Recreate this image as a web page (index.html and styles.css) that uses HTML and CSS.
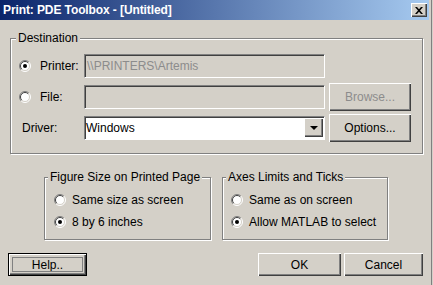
FILE: index.html
```html
<!DOCTYPE html>
<html lang="en">
<head>
    <meta charset="UTF-8">
    <title>Print: PDE Toolbox - [Untitled]</title>
    <link rel="stylesheet" href="styles.css">
</head>
<body>
    <svg class="defs" width="0" height="0">
        <symbol id="radio-off" viewBox="0 0 12 12">
            <circle cx="6" cy="6" r="5" fill="#fff"/>
            <path d="M2.1 9.9 A5.5 5.5 0 0 1 9.9 2.1" fill="none" stroke="#808080"/>
            <path d="M9.9 2.1 A5.5 5.5 0 0 1 2.1 9.9" fill="none" stroke="#fff"/>
            <path d="M2.8 9.2 A4.5 4.5 0 0 1 9.2 2.8" fill="none" stroke="#404040"/>
            <path d="M9.2 2.8 A4.5 4.5 0 0 1 2.8 9.2" fill="none" stroke="#d4d0c8"/>
        </symbol>
        <symbol id="radio-on" viewBox="0 0 12 12">
            <use href="#radio-off"/>
            <circle cx="6" cy="6" r="2" fill="#000"/>
        </symbol>
    </svg>

    <div class="frame">
        <div class="titlebar">
            <span class="title">Print: PDE Toolbox - [Untitled]</span>
            <span class="close">
                <svg width="8" height="7" viewBox="0 0 8 7">
                    <path d="M0 0h2l2 2.2L6 0h2L5 3.5 8 7H6L4 4.8 2 7H0l3-3.5z" fill="#000"/>
                </svg>
            </span>
        </div>

        <div class="content">
            <fieldset class="group dest">
                <legend>Destination</legend>
                <div class="row">
                    <label class="choice"><svg class="radio"><use href="#radio-on"/></svg>Printer:</label>
                    <div class="field disabled">\\PRINTERS\Artemis</div>
                </div>
                <div class="row">
                    <label class="choice"><svg class="radio"><use href="#radio-off"/></svg>File:</label>
                    <div class="field disabled"></div>
                    <button class="btn side" disabled>Browse...</button>
                </div>
                <div class="row">
                    <span class="label">Driver:</span>
                    <div class="field combo">
                        <span class="value">Windows</span>
                        <span class="arrow"></span>
                    </div>
                    <button class="btn side">Options...</button>
                </div>
            </fieldset>

            <div class="options">
                <fieldset class="group small figure">
                    <legend>Figure Size on Printed Page</legend>
                    <label class="opt"><svg class="radio"><use href="#radio-off"/></svg>Same size as screen</label>
                    <label class="opt"><svg class="radio"><use href="#radio-on"/></svg>8 by 6 inches</label>
                </fieldset>
                <fieldset class="group small axes">
                    <legend>Axes Limits and Ticks</legend>
                    <label class="opt"><svg class="radio"><use href="#radio-off"/></svg>Same as on screen</label>
                    <label class="opt"><svg class="radio"><use href="#radio-on"/></svg>Allow MATLAB to select</label>
                </fieldset>
            </div>

            <div class="actions">
                <button class="btn default help">Help..</button>
                <button class="btn ok">OK</button>
                <button class="btn cancel">Cancel</button>
            </div>
        </div>
    </div>
</body>
</html>
```

FILE: styles.css
```css
body {
    margin: 0;
    background-color: #d4d0c8;
    font-family: "Liberation Sans", Arial, sans-serif;
    font-size: 12px;
    color: #000;
    overflow: hidden;
}
.defs {
    position: absolute;
}
.frame {
    width: 431px;
    height: 285px;
    border-right: 1px solid #808080;
}
.titlebar {
    width: 429px;
    height: 20px;
    display: flex;
    align-items: center;
    justify-content: space-between;
    background: linear-gradient(to right, #0a246a, #a6caf0);
    box-sizing: border-box;
    padding: 0 2px 0 3px;
}
.title {
    color: #fff;
    font-weight: bold;
    font-size: 12px;
    letter-spacing: -0.1px;
}
.close {
    width: 16px;
    height: 14px;
    display: flex;
    align-items: center;
    justify-content: center;
    background-color: #d4d0c8;
    box-sizing: border-box;
    box-shadow: inset 1px 1px #fff, inset -1px -1px #404040, inset -2px -2px #808080;
}
.content {
    padding: 11px 0 0 10px;
}
.group {
    margin: 0;
    padding: 0;
    border: 1px solid #808080;
    box-shadow: 1px 1px 0 #fff, inset 1px 1px 0 #fff;
    box-sizing: border-box;
    min-width: 0;
}
.group legend {
    margin-left: 5px;
    padding: 0 2px;
    line-height: 15px;
    white-space: nowrap;
    background-color: #d4d0c8;
}
.dest {
    width: 413px;
    padding: 4px 0 10px 0;
}
.row {
    height: 31px;
    display: flex;
    align-items: center;
    padding-left: 8px;
}
.choice, .label {
    width: 65px;
    display: flex;
    align-items: center;
    gap: 9px;
}
.label {
    padding-left: 3px;
    box-sizing: border-box;
}
.radio {
    width: 12px;
    height: 12px;
    flex: none;
}
.field {
    width: 241px;
    height: 24px;
    box-sizing: border-box;
    display: flex;
    align-items: center;
    border-top: 1px solid #808080;
    border-left: 1px solid #808080;
    border-right: 1px solid #fff;
    border-bottom: 1px solid #fff;
    box-shadow: inset 1px 1px #404040;
    padding-left: 2px;
    background-color: #fff;
}
.field.disabled {
    background-color: #d4d0c8;
    color: #8c8c8c;
}
.combo {
    justify-content: space-between;
    padding-left: 1px;
    padding-right: 1px;
}
.arrow {
    width: 19px;
    height: 19px;
    display: flex;
    align-items: center;
    justify-content: center;
    background-color: #d4d0c8;
    box-shadow: inset 1px 1px #fff, inset -1px -1px #404040, inset -2px -2px #808080;
}
.arrow::before {
    content: "";
    border-left: 4px solid transparent;
    border-right: 4px solid transparent;
    border-top: 4px solid #000;
    margin-top: 1px;
}
.btn {
    font-family: "Liberation Sans", Arial, sans-serif;
    font-size: 12px;
    color: #000;
    background-color: #d4d0c8;
    border: none;
    padding: 0;
    box-sizing: border-box;
    box-shadow: inset 1px 1px #fff, inset -1px -1px #404040, inset -2px -2px #808080;
}
.btn:disabled {
    color: #8c8c8c;
}
.side {
    width: 82px;
    height: 28px;
    margin-left: 4px;
}
.options {
    display: flex;
    gap: 11px;
    margin: 16px 0 0 34px;
}
.small {
    padding: 4px 0 6px 0;
}
.small legend {
    margin-left: 3px;
}
.figure {
    width: 167px;
}
.axes {
    width: 166px;
}
.opt {
    height: 22px;
    display: flex;
    align-items: center;
    gap: 6px;
    padding-left: 9px;
}
.axes .opt {
    padding-left: 8px;
}
.actions {
    display: flex;
    width: 415px;
    margin: 13px 0 0 -2px;
}
.actions .btn {
    height: 23px;
}
.help {
    width: 79px;
    margin-right: auto;
    position: relative;
}
.default {
    border: 1px solid #000;
}
.default::after {
    content: "";
    position: absolute;
    inset: 3px;
    border: 1px solid #808080;
}
.ok {
    width: 83px;
}
.cancel {
    width: 79px;
    margin-left: 3px;
}
```
